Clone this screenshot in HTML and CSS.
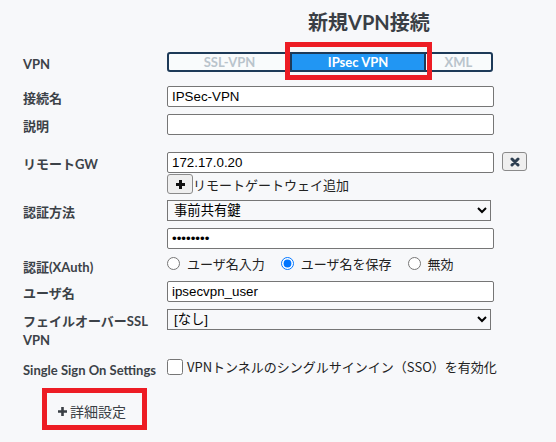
FILE: index.html
```html
<!DOCTYPE html>
<html lang="ja">
<head>
  <meta charset="UTF-8">
  <meta name="viewport" content="width=device-width, initial-scale=1.0">
  <title>新規VPN接続</title>
  <link rel="stylesheet" href="styles.css">
</head>
<body>
<div class="page">
  <h1 class="title">新規VPN接続</h1>

  <div class="row row-vpn">
    <div class="label">VPN</div>
    <div class="segments">
      <button class="seg seg-ssl">SSL-VPN</button>
      <button class="seg seg-ipsec active">IPsec VPN</button>
      <button class="seg seg-xml">XML</button>
    </div>
  </div>

  <div class="row row-name">
    <div class="label">接続名</div>
    <input class="field" type="text" value="IPSec-VPN">
  </div>

  <div class="row row-desc">
    <div class="label">説明</div>
    <input class="field" type="text" value="">
  </div>

  <div class="row row-gw">
    <div class="label">リモートGW</div>
    <div class="stack">
      <div class="gw-line">
        <input class="field" type="text" value="172.17.0.20">
        <button class="icon-btn remove-btn">
          <svg width="10" height="10" viewBox="0 0 10 10"><path d="M2 2 L8 8 M8 2 L2 8" stroke="#2d3e50" stroke-width="3" stroke-linecap="round"/></svg>
        </button>
      </div>
      <div class="add-line">
        <button class="icon-btn add-btn">
          <svg width="11" height="11" viewBox="0 0 11 11"><path d="M5.5 1 V10 M1 5.5 H10" stroke="#111" stroke-width="3"/></svg>
        </button>
        <span class="add-text">リモートゲートウェイ追加</span>
      </div>
    </div>
  </div>

  <div class="row row-auth">
    <div class="label">認証方法</div>
    <div class="stack stack-auth">
      <select class="select">
        <option>事前共有鍵</option>
      </select>
      <input class="field" type="password" value="12345678">
    </div>
  </div>

  <div class="row row-xauth">
    <div class="label">認証(XAuth)</div>
    <div class="radios">
      <label class="radio"><input type="radio" name="xauth"><span>ユーザ名入力</span></label>
      <label class="radio"><input type="radio" name="xauth" checked><span>ユーザ名を保存</span></label>
      <label class="radio"><input type="radio" name="xauth"><span>無効</span></label>
    </div>
  </div>

  <div class="row row-user">
    <div class="label">ユーザ名</div>
    <input class="field" type="text" value="ipsecvpn_user">
  </div>

  <div class="row row-failover">
    <div class="label">フェイルオーバーSSL VPN</div>
    <select class="select">
      <option>[なし]</option>
    </select>
  </div>

  <div class="row row-sso">
    <div class="label">Single Sign On Settings</div>
    <label class="check"><input type="checkbox"><span>VPNトンネルのシングルサインイン（SSO）を有効化</span></label>
  </div>

  <a class="advanced" href="#">
    <svg width="9" height="9" viewBox="0 0 9 9"><path d="M4.5 0 V9 M0 4.5 H9" stroke="#3a3f45" stroke-width="2.6"/></svg>
    <span>詳細設定</span>
  </a>
</div>
</body>
</html>
```

FILE: styles.css
```css
html, body {
  margin: 0;
  background-color: #f7f8fa;
}
body {
  font-family: Lato, "Noto Sans CJK JP", sans-serif;
  color: #3a3f45;
  width: 556px;
  height: 442px;
  overflow: hidden;
}
.page {
  padding-left: 23px;
}
.title {
  margin: 0;
  padding: 10px 0 0 285px;
  font-size: 20px;
  line-height: 24px;
  font-weight: bold;
  color: #3a3f45;
}
.row {
  display: grid;
  grid-template-columns: 144px 360px;
  align-items: start;
}
.label {
  padding-top: 3px;
  line-height: 19px;
  font-size: 13px;
  font-weight: bold;
  color: #3c4248;
}
.row-vpn { margin-top: 18px; }
.row-name { margin-top: 12px; }
.row-desc { margin-top: 6px; }
.row-gw { margin-top: 16px; }
.row-auth { margin-top: 6px; }
.row-xauth { margin-top: 6px; }
.row-user { margin-top: 4px; }
.row-failover { margin-top: 6px; }
.row-sso { margin-top: 8px; }

/* segmented control */
.segments {
  display: flex;
  width: 326px;
  height: 20px;
  box-sizing: border-box;
  border: 2px solid #1d3a58;
  border-radius: 3px;
  background-color: #f9fbfc;
}
.seg {
  box-sizing: border-box;
  height: 16px;
  margin: 0;
  padding: 0;
  border: none;
  background: none;
  font-family: Lato, sans-serif;
  font-size: 13px;
  font-weight: bold;
  line-height: 16px;
  color: #b9c4cc;
}
.seg + .seg {
  border-left: 2px solid #1d3a58;
}
.seg-ssl { width: 121px; }
.seg-ipsec { width: 134px; }
.seg-xml { width: 67px; }
.seg.active {
  position: relative;
  background-color: #2196f3;
  color: #fff;
}
.seg.active::after {
  content: "";
  position: absolute;
  left: -7px;
  right: -8px;
  top: -12px;
  bottom: -10px;
  border: 5px solid #ed1c24;
}

/* inputs */
.field {
  width: 327px;
  height: 21px;
  box-sizing: border-box;
  margin: 0;
  padding: 0 4px;
  border: 1px solid #767676;
  border-radius: 2px;
  background-color: #fff;
  font-family: "Liberation Sans", "Noto Sans CJK JP", sans-serif;
  font-size: 13.33px;
  color: #000;
}
.select {
  width: 324px;
  height: 21px;
  box-sizing: border-box;
  margin: 0;
  padding: 0 2px;
  border: 1px solid #767676;
  border-radius: 0;
  background-color: #f7f8fa;
  font-family: "Liberation Sans", "Noto Sans CJK JP", sans-serif;
  font-size: 13.33px;
  color: #000;
}
.stack {
  display: flex;
  flex-direction: column;
  gap: 1px;
}
.stack-auth {
  gap: 7px;
}
.gw-line {
  display: flex;
  align-items: flex-start;
  gap: 8px;
}
.icon-btn {
  display: flex;
  align-items: center;
  justify-content: center;
  box-sizing: border-box;
  margin: 0;
  padding: 0;
  border: 1px solid #8a8a8a;
  border-radius: 3px;
  background-color: #efefef;
}
.remove-btn {
  width: 25px;
  height: 19px;
}
.add-btn {
  width: 26px;
  height: 20px;
}
.add-line {
  display: flex;
  align-items: center;
}
.add-text {
  font-family: "Noto Sans CJK JP", sans-serif;
  font-size: 13px;
  color: #222;
}

/* radios & checkbox */
.radios {
  display: flex;
  align-items: center;
  height: 16px;
  gap: 16px;
}
.radio, .check {
  display: flex;
  align-items: center;
  font-family: "Noto Sans CJK JP", sans-serif;
  font-size: 13px;
  color: #222;
}
.radio input {
  width: 13px;
  height: 13px;
  margin: 0 7px 0 0;
}
.check {
  height: 17px;
}
.check input {
  width: 16px;
  height: 16px;
  margin: 0 4px 0 0;
}

/* advanced link */
.advanced {
  display: inline-flex;
  align-items: center;
  gap: 3px;
  box-sizing: border-box;
  width: 105px;
  height: 42px;
  margin: 8px 0 0 19px;
  padding: 4px 0 0 11px;
  border: 5px solid #ed1c24;
  font-family: "Noto Sans CJK JP", sans-serif;
  font-size: 14px;
  color: #3a3f45;
  text-decoration: none;
}
```
